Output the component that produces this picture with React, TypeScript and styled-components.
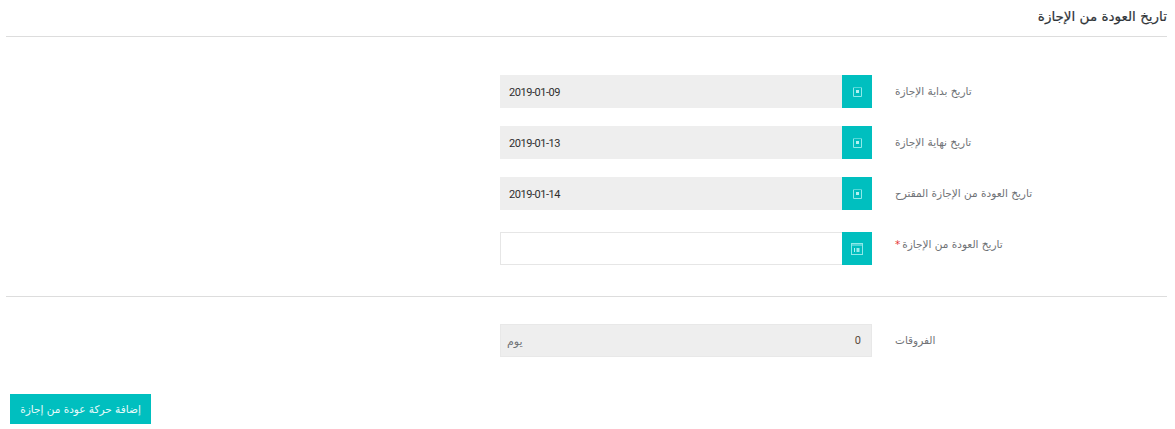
import React from "react";
import styled, { createGlobalStyle } from "styled-components";

const Global = createGlobalStyle`
  html, body { margin: 0; padding: 0; background: #fff; }
  body { font-family: "DejaVu Sans", "Noto Sans", sans-serif; }
`;

const Page = styled.div`
  width: 1175px;
  height: 429px;
  overflow: hidden;
  box-sizing: border-box;
  padding: 0 8px 0 6px;
  display: flex;
  flex-direction: column;
`;

const Header = styled.h2`
  margin: 0;
  box-sizing: border-box;
  padding: 8px 0 0;
  border-bottom: 1px solid #ddd;
  height: 37px;
  font-size: 13.5px;
  line-height: 16px;
  font-weight: 400;
  color: #2f3438;
  direction: rtl;
  -webkit-text-stroke: 0.2px #2f3438;
`;

const Form = styled.div`
  padding-top: 38px;
  display: flex;
  flex-direction: column;
  gap: 18px;
  padding-bottom: 31px;
  border-bottom: 1px solid #ddd;
`;

const Row = styled.div<{ $spaced?: boolean }>`
  display: flex;
  padding-left: 494px;
  height: 33px;
  margin-top: ${(p) => (p.$spaced ? "4px" : "0")};
`;

const Field = styled.div`
  width: 372px;
  height: 33px;
  display: flex;
`;

const Input = styled.div<{ $readonly?: boolean }>`
  flex: 1;
  box-sizing: border-box;
  height: 33px;
  padding: 0 8px;
  background: ${(p) => (p.$readonly ? "#eeeeee" : "#fff")};
  border: 1px solid ${(p) => (p.$readonly ? "#eeeeee" : "#e6e6e6")};
  border-right: 0;
  font-family: Roboto, "Liberation Sans", sans-serif;
  font-size: 11px;
  letter-spacing: -0.45px;
  line-height: 33px;
  color: #2e2e2e;
`;

const Addon = styled.div`
  width: 30px;
  height: 33px;
  background: #00bfbf;
  display: flex;
  align-items: center;
  justify-content: center;
`;

const Label = styled.label<{ $raised?: boolean }>`
  margin-left: 23px;
  height: 33px;
  line-height: ${(p) => (p.$raised ? "25px" : "33px")};
  direction: rtl;
  font-size: 10.5px;
  color: #6f7276;
  white-space: nowrap;
`;

const Star = styled.span`
  color: #e53935;
  margin-right: 2px;
`;

const Diff = styled.div`
  display: flex;
  padding: 27px 0 0 494px;
  height: 33px;
`;

const DiffBox = styled.div`
  width: 372px;
  height: 33px;
  box-sizing: border-box;
  background: #eeeeee;
  border: 1px solid #e8e8e8;
  display: flex;
  justify-content: space-between;
  align-items: center;
  padding: 0 10px 0 6px;
`;

const Unit = styled.span`
  font-size: 11px;
  color: #6f7276;
  direction: rtl;
  padding-top: 2px;
`;

const Zero = styled.span`
  font-family: Roboto, "Liberation Sans", sans-serif;
  font-size: 11px;
  color: #5a4a3a;
`;

const Footer = styled.div`
  padding: 37px 0 0 4px;
`;

const Submit = styled.button`
  width: 141px;
  height: 30px;
  padding: 0;
  border: 0;
  background: #00bfbf;
  color: #e8fbfb;
  font-family: inherit;
  font-size: 10.5px;
  direction: rtl;
`;

const SmallCal = () => (
  <svg width="9" height="10" viewBox="0 0 9 10" fill="none">
    <path d="M0.5 0.5V9.5H8.5V0.5" stroke="#8fe9e9" />
    <rect x="1" y="0" width="7" height="1" fill="#55d8d8" />
    <rect x="3" y="3" width="3" height="3" fill="#b5f1f1" />
  </svg>
);

const BigCal = () => (
  <svg width="12" height="12" viewBox="0 0 12 12" fill="none">
    <rect x="0.5" y="0.5" width="11" height="11" stroke="#8fe9e9" />
    <rect x="1" y="1" width="10" height="2" fill="#4fd6d6" />
    <rect x="3" y="5" width="1" height="4" fill="#b5f1f1" />
    <rect x="5.5" y="5" width="3" height="4" fill="#9aecec" />
  </svg>
);

const rows = [
  { label: "تاريخ بداية الإجازة", value: "2019-01-09" },
  { label: "تاريخ نهاية الإجازة", value: "2019-01-13" },
  { label: "تاريخ العودة من الإجازة المقترح", value: "2019-01-14" },
];

export default function App() {
  return (
    <Page>
      <Global />
      <Header>تاريخ العودة من الإجازة</Header>
      <Form>
        {rows.map((r) => (
          <Row key={r.value}>
            <Field>
              <Input $readonly>{r.value}</Input>
              <Addon><SmallCal /></Addon>
            </Field>
            <Label>{r.label}</Label>
          </Row>
        ))}
        <Row $spaced>
          <Field>
            <Input />
            <Addon><BigCal /></Addon>
          </Field>
          <Label $raised>تاريخ العودة من الإجازة<Star>*</Star></Label>
        </Row>
      </Form>
      <Diff>
        <DiffBox>
          <Unit>يوم</Unit>
          <Zero>0</Zero>
        </DiffBox>
        <Label>الفروقات</Label>
      </Diff>
      <Footer>
        <Submit>إضافة حركة عودة من إجازة</Submit>
      </Footer>
    </Page>
  );
}
